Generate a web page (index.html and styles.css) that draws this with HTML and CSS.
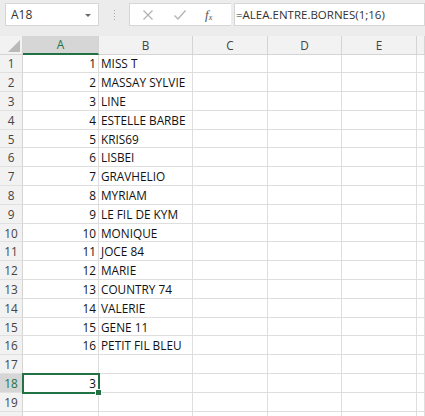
FILE: index.html
```html
<!DOCTYPE html>
<html>
<head>
<meta charset="utf-8">
<link rel="stylesheet" href="styles.css">
</head>
<body>
<div class="toolbar">
  <div class="namebox"><span class="ref">A18</span>
    <svg class="dd" width="8" height="5" viewBox="0 0 8 5"><path d="M1 1 L4 4 L7 1 Z" fill="#6a6a6a"/></svg>
  </div>
  <div class="sep"><i></i><i></i><i></i><i></i></div>
  <div class="fxbox">
    <svg class="ico" width="12" height="12" viewBox="0 0 12 12"><path d="M1.5 1.5 L10.5 10.5 M10.5 1.5 L1.5 10.5" stroke="#b4b4b4" stroke-width="1.3" fill="none"/></svg>
    <svg class="ico" width="14" height="12" viewBox="0 0 14 12"><path d="M1.5 6.5 L5 10 L12.5 1.5" stroke="#b4b4b4" stroke-width="1.4" fill="none"/></svg>
    <span class="fx">f<sub>x</sub></span>
  </div>
  <div class="formula">=ALEA.ENTRE.BORNES(1;16)</div>
</div>
<div class="sheet">
  <div class="corner"><svg width="12" height="12" viewBox="0 0 12 12"><path d="M12 0 L12 12 L0 12 Z" fill="#b9b9b9"/></svg></div>
  <div class="ch active">A</div><div class="ch">B</div><div class="ch">C</div><div class="ch">D</div><div class="ch">E</div><div class="ch last"></div>

  <div class="rh">1</div><div class="c num">1</div><div class="c">MISS T</div><div class="c"></div><div class="c"></div><div class="c"></div><div class="c"></div>
  <div class="rh">2</div><div class="c num">2</div><div class="c">MASSAY SYLVIE</div><div class="c"></div><div class="c"></div><div class="c"></div><div class="c"></div>
  <div class="rh">3</div><div class="c num">3</div><div class="c">LINE</div><div class="c"></div><div class="c"></div><div class="c"></div><div class="c"></div>
  <div class="rh">4</div><div class="c num">4</div><div class="c">ESTELLE BARBE</div><div class="c"></div><div class="c"></div><div class="c"></div><div class="c"></div>
  <div class="rh">5</div><div class="c num">5</div><div class="c">KRIS69</div><div class="c"></div><div class="c"></div><div class="c"></div><div class="c"></div>
  <div class="rh">6</div><div class="c num">6</div><div class="c">LISBEI</div><div class="c"></div><div class="c"></div><div class="c"></div><div class="c"></div>
  <div class="rh">7</div><div class="c num">7</div><div class="c">GRAVHELIO</div><div class="c"></div><div class="c"></div><div class="c"></div><div class="c"></div>
  <div class="rh">8</div><div class="c num">8</div><div class="c">MYRIAM</div><div class="c"></div><div class="c"></div><div class="c"></div><div class="c"></div>
  <div class="rh">9</div><div class="c num">9</div><div class="c">LE FIL DE KYM</div><div class="c"></div><div class="c"></div><div class="c"></div><div class="c"></div>
  <div class="rh">10</div><div class="c num">10</div><div class="c">MONIQUE</div><div class="c"></div><div class="c"></div><div class="c"></div><div class="c"></div>
  <div class="rh">11</div><div class="c num">11</div><div class="c">JOCE 84</div><div class="c"></div><div class="c"></div><div class="c"></div><div class="c"></div>
  <div class="rh">12</div><div class="c num">12</div><div class="c">MARIE</div><div class="c"></div><div class="c"></div><div class="c"></div><div class="c"></div>
  <div class="rh">13</div><div class="c num">13</div><div class="c">COUNTRY 74</div><div class="c"></div><div class="c"></div><div class="c"></div><div class="c"></div>
  <div class="rh">14</div><div class="c num">14</div><div class="c">VALERIE</div><div class="c"></div><div class="c"></div><div class="c"></div><div class="c"></div>
  <div class="rh">15</div><div class="c num">15</div><div class="c">GENE 11</div><div class="c"></div><div class="c"></div><div class="c"></div><div class="c"></div>
  <div class="rh">16</div><div class="c num">16</div><div class="c">PETIT FIL BLEU</div><div class="c"></div><div class="c"></div><div class="c"></div><div class="c"></div>
  <div class="rh">17</div><div class="c"></div><div class="c"></div><div class="c"></div><div class="c"></div><div class="c"></div><div class="c"></div>
  <div class="rh active">18</div><div class="c num sel">3<span class="handle"></span></div><div class="c"></div><div class="c"></div><div class="c"></div><div class="c"></div><div class="c"></div>
  <div class="rh">19</div><div class="c"></div><div class="c"></div><div class="c"></div><div class="c"></div><div class="c"></div><div class="c"></div>
  <div class="rh"></div><div class="c"></div><div class="c"></div><div class="c"></div><div class="c"></div><div class="c"></div><div class="c"></div>
</div>
</body>
</html>
```
FILE: styles.css
```css
html, body {
  margin: 0;
  padding: 0;
  background: #ffffff;
  overflow: hidden;
}
body {
  width: 425px;
  height: 416px;
  font-family: "Open Sans", "Noto Sans", sans-serif;
  color: #222;
}
.toolbar {
  height: 36px;
  background: #ececec;
  display: flex;
  align-items: flex-start;
  padding-top: 3px;
  box-sizing: border-box;
}
.namebox {
  margin-left: 5px;
  width: 94px;
  height: 23px;
  box-sizing: border-box;
  background: #fff;
  border: 1px solid #d6d6d6;
  display: flex;
  align-items: center;
  justify-content: space-between;
  padding: 0 6px 0 5px;
  font-size: 12px;
  color: #333;
}
.dd { margin-top: 1px; }
.sep {
  width: 30px;
  height: 23px;
  display: flex;
  flex-direction: column;
  align-items: center;
  justify-content: center;
  gap: 2px;
}
.sep i {
  display: block;
  width: 1px;
  height: 1px;
  background: #a8a8a8;
}
.fxbox {
  width: 102px;
  height: 23px;
  box-sizing: border-box;
  background: #fff;
  border: 1px solid #d6d6d6;
  border-right: none;
  display: flex;
  align-items: center;
  padding-left: 12px;
  gap: 19px;
}
.fx {
  font-family: "Liberation Serif", serif;
  font-style: italic;
  font-size: 13px;
  color: #555;
  margin-left: -1px;
}
.fx sub { font-size: 8px; vertical-align: -1px; }
.formula {
  flex: 1;
  height: 23px;
  box-sizing: border-box;
  background: #fff;
  border: 1px solid #d6d6d6;
  margin-left: 3px;
  font-size: 11.5px;
  color: #333;
  display: flex;
  align-items: center;
  padding-left: 1px;
}
.sheet {
  display: grid;
  grid-template-columns: 23px 76px 94px 75px 74px 75px 8px;
  grid-template-rows: 18.5px repeat(20, 18.8px);
  font-size: 11.8px;
}
.corner {
  background: #f2f2f2;
  border-right: 1px solid #d4d4d4;
  border-bottom: 1px solid #d4d4d4;
  display: flex;
  align-items: flex-end;
  justify-content: flex-end;
  padding: 0 2px 2px 0;
  box-sizing: border-box;
}
.ch {
  background: #f2f2f2;
  border-right: 1px solid #d4d4d4;
  border-bottom: 1px solid #d4d4d4;
  box-sizing: border-box;
  display: flex;
  align-items: center;
  justify-content: center;
  color: #444;
}
.ch.active {
  background: #d6d6d6;
  border-bottom: 2px solid #217346;
  color: #217346;
}
.rh {
  background: #f2f2f2;
  border-right: 1px solid #d4d4d4;
  border-bottom: 1px solid #e0e0e0;
  box-sizing: border-box;
  display: flex;
  align-items: center;
  justify-content: center;
  color: #444;
}
.rh.active {
  background: #d6d6d6;
  color: #217346;
}
.c {
  border-right: 1px solid #dedede;
  border-bottom: 1px solid #dedede;
  box-sizing: border-box;
  display: flex;
  align-items: center;
  padding: 0 2px;
  white-space: nowrap;
  color: #111;
  min-width: 0;
}
.c.num { justify-content: flex-end; }
.c.sel {
  position: relative;
  outline: 2px solid #217346;
  outline-offset: -1px;
  z-index: 1;
}
.handle {
  position: absolute;
  right: -4px;
  bottom: -4px;
  width: 5px;
  height: 5px;
  background: #217346;
  border: 1px solid #fff;
}
```
